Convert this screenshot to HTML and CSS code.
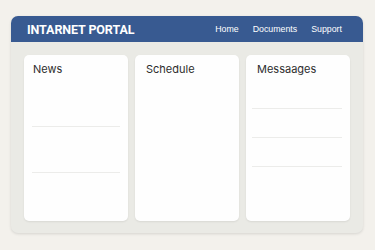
FILE: index.html
```html
<!DOCTYPE html>
<html>
<head>
<meta charset="utf-8">
<link rel="stylesheet" href="styles.css">
</head>
<body>
<div class="frame">
  <header class="topbar">
    <div class="brand">INTARNET PORTAL</div>
    <nav class="nav">
      <span>Home</span>
      <span>Documents</span>
      <span>Support</span>
    </nav>
  </header>
  <main class="cards">
    <section class="card news">
      <h2>News</h2>
      <div class="rule r1"></div>
      <div class="rule r2"></div>
    </section>
    <section class="card schedule">
      <h2>Schedule</h2>
    </section>
    <section class="card messages">
      <h2>Messaages</h2>
      <div class="rule m1"></div>
      <div class="rule m2"></div>
      <div class="rule m3"></div>
    </section>
  </main>
</div>
</body>
</html>
```
FILE: styles.css
```css
html, body {
  margin: 0;
  padding: 0;
}
body {
  width: 375px;
  height: 250px;
  background: #f3f1ec;
  font-family: Inter, "Liberation Sans", sans-serif;
  padding: 16px 12px 0 11px;
  box-sizing: border-box;
}
.frame {
  width: 352px;
  height: 217px;
  background: #eaeae5;
  border-radius: 7px;
  box-shadow: 0 1px 3px rgba(0,0,0,0.12);
  overflow: hidden;
  display: flex;
  flex-direction: column;
}
.topbar {
  height: 26px;
  background: #385a91;
  display: flex;
  align-items: center;
  justify-content: space-between;
  padding: 0 21px 0 16px;
  color: #fff;
  flex: none;
}
.brand {
  font-family: Roboto, "Liberation Sans", Arial, sans-serif;
  font-weight: bold;
  font-size: 12.5px;
  letter-spacing: -0.1px;
}
.nav {
  display: flex;
  gap: 14px;
  font-family: "Liberation Sans", Arial, sans-serif;
  font-size: 8.8px;
}
.cards {
  flex: 1;
  display: grid;
  grid-template-columns: 104px 104px 104px;
  gap: 7px;
  padding: 13px 12px 12px 13px;
}
.card {
  background: #fefefe;
  border-radius: 5px;
  box-shadow: 0 1px 2px rgba(0,0,0,0.08);
  position: relative;
  padding: 8px 8px 0 9px;
}
.schedule, .messages {
  padding-left: 11px;
}
.card h2 {
  margin: 0;
  font-weight: 400;
  font-size: 11px;
  color: #2d2d2d;
  line-height: 13px;
}
.rule {
  position: absolute;
  height: 1px;
  background: #ececea;
}
.r1 { left: 8px; right: 8px; top: 71px; }
.r2 { left: 8px; right: 8px; top: 117px; }
.m1 { left: 6px; right: 8px; top: 53px; }
.m2 { left: 6px; right: 8px; top: 82px; }
.m3 { left: 6px; right: 8px; top: 111px; }
```
